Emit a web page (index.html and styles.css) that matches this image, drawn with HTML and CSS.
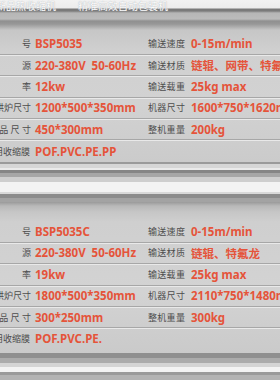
FILE: index.html
```html
<!DOCTYPE html>
<html lang="zh">
<head>
<meta charset="utf-8">
<link rel="stylesheet" href="styles.css">
</head>
<body>
<div class="page">
  <div class="top">
    <span class="top-a">新品热收缩机</span>
    <span class="top-b">精准高效自动包装机</span>
  </div>
  <section class="panel p1">
    <div class="row">
      <span class="lab">型&#12288;&#12288;&#12288;号</span><span class="val">BSP5035</span>
      <span class="lab2">输送速度</span><span class="val">0-15m/min</span>
    </div>
    <div class="row">
      <span class="lab">电&#12288;&#12288;&#12288;源</span><span class="val">220-380V&nbsp;&nbsp;50-60Hz</span>
      <span class="lab2">输送材质</span><span class="val">链辊、网带、特氟龙</span>
    </div>
    <div class="row">
      <span class="lab">功&#12288;&#12288;&#12288;率</span><span class="val">12kw</span>
      <span class="lab2">输送载重</span><span class="val">25kg max</span>
    </div>
    <div class="row">
      <span class="lab">烘炉尺寸</span><span class="val">1200*500*350mm</span>
      <span class="lab2">机器尺寸</span><span class="val">1600*750*1620mm</span>
    </div>
    <div class="row">
      <span class="lab sp">产品尺寸</span><span class="val">450*300mm</span>
      <span class="lab2">整机重量</span><span class="val">200kg</span>
    </div>
    <div class="row">
      <span class="lab film">适用收缩膜</span><span class="val">POF.PVC.PE.PP</span>
      <span class="lab2"></span><span class="val"></span>
    </div>
  </section>
  <div class="divider"></div>
  <section class="panel p2">
    <div class="row">
      <span class="lab">型&#12288;&#12288;&#12288;号</span><span class="val">BSP5035C</span>
      <span class="lab2">输送速度</span><span class="val">0-15m/min</span>
    </div>
    <div class="row">
      <span class="lab">电&#12288;&#12288;&#12288;源</span><span class="val">220-380V&nbsp;&nbsp;50-60Hz</span>
      <span class="lab2">输送材质</span><span class="val">链辊、特氟龙</span>
    </div>
    <div class="row">
      <span class="lab">功&#12288;&#12288;&#12288;率</span><span class="val">19kw</span>
      <span class="lab2">输送载重</span><span class="val">25kg max</span>
    </div>
    <div class="row">
      <span class="lab">烘炉尺寸</span><span class="val">1800*500*350mm</span>
      <span class="lab2">机器尺寸</span><span class="val">2110*750*1480mm</span>
    </div>
    <div class="row">
      <span class="lab sp">产品尺寸</span><span class="val">300*250mm</span>
      <span class="lab2">整机重量</span><span class="val">300kg</span>
    </div>
    <div class="row">
      <span class="lab film">适用收缩膜</span><span class="val">POF.PVC.PE.</span>
      <span class="lab2"></span><span class="val"></span>
    </div>
  </section>
  <div class="bottom"></div>
</div>
</body>
</html>
```
FILE: styles.css
```css
html, body {
  margin: 0;
  padding: 0;
}
body {
  width: 280px;
  height: 380px;
  overflow: hidden;
  background: #cfcfcf;
  font-family: "Noto Sans", "Noto Sans CJK SC", sans-serif;
}
.page {
  width: 280px;
  height: 380px;
  overflow: hidden;
  display: flex;
  flex-direction: column;
}
.top {
  height: 11px;
  flex: none;
  display: flex;
  align-items: center;
  gap: 22px;
  background: linear-gradient(to bottom, #f2f2f2 0, #ececec 8px, #7a7a7a 9px, #7a7a7a 11px);
  font-family: "Noto Sans CJK SC", sans-serif;
  font-size: 10px;
  line-height: 9px;
  color: #fbfbfb;
  text-shadow: 0 0 1px #9aa0a8;
  overflow: hidden;
  white-space: nowrap;
}
.top-a { margin-left: -4px; }
.panel {
  flex: none;
  display: flex;
  flex-direction: column;
}
.p1 {
  padding-top: 22.5px;
  background: linear-gradient(to bottom,
    #7c7c7c 0, #b6b6b6 2px, #bbbbbb 8px, #909090 10px, #979797 13px,
    #c6c6c6 19px, #d0d0d0 40px, #d2d2d2 90px, #cbcbcb 100%);
}
.p2 {
  padding-top: 19.5px;
  padding-bottom: 3px;
  background: linear-gradient(to bottom,
    #9a9a9a 0, #b9b9b9 4px, #c6c6c6 10px, #cfcfcf 20px,
    #d3d3d3 90px, #cacaca 100%);
}
.row {
  height: 21.4px;
  box-sizing: border-box;
  display: grid;
  grid-template-columns: 31px 117px 39px 1fr;
  align-items: center;
  border-bottom: 1px solid #a7a7a7;
  box-shadow: 0 1px 0 #e9e9e9;
  white-space: nowrap;
}
.row:last-child {
  border-bottom: none;
  box-shadow: none;
}
.lab {
  display: flex;
  justify-content: flex-end;
  font-family: "Noto Sans CJK SC", sans-serif;
  font-size: 9px;
  color: #4d4d4d;
  white-space: nowrap;
}
.lab.sp { letter-spacing: 2.4px; margin-right: -2.4px; }
.lab.film { margin-right: 1px; }
.lab2 {
  font-family: "Noto Sans CJK SC", sans-serif;
  font-size: 9px;
  letter-spacing: 0.3px;
  color: #4d4d4d;
  white-space: nowrap;
}
.val {
  padding-left: 4px;
  font-family: "Noto Sans", "Noto Sans CJK SC", sans-serif;
  font-weight: 700;
  font-size: 11.5px;
  color: #e5543a;
  white-space: nowrap;
}
.divider {
  flex: none;
  height: 40px;
  background: linear-gradient(to bottom,
    #9a9a9a 0, #9a9a9a 2px,
    #d6d6d6 2px, #d6d6d6 6px,
    #eaeaea 6px, #eaeaea 8px,
    #858585 8px, #858585 11px,
    #a6a6a6 11px, #a6a6a6 15px,
    #cecece 15px, #cecece 20px,
    #f3f3f3 20px, #f3f3f3 30px,
    #d9d9d9 30px, #d9d9d9 32px,
    #8c8c8c 32px, #8c8c8c 36px,
    #a3a3a3 36px, #a3a3a3 40px);
}
.bottom {
  flex: 1;
  background: linear-gradient(to bottom,
    #8f8f8f 0, #8f8f8f 5px,
    #ababab 5px, #ababab 10px,
    #d4d4d4 10px, #d4d4d4 14px,
    #f3f3f3 14px, #f3f3f3 19px,
    #9a9a9a 19px, #9a9a9a 22px,
    #b3b3b3 22px, #b3b3b3 27px);
}
```
